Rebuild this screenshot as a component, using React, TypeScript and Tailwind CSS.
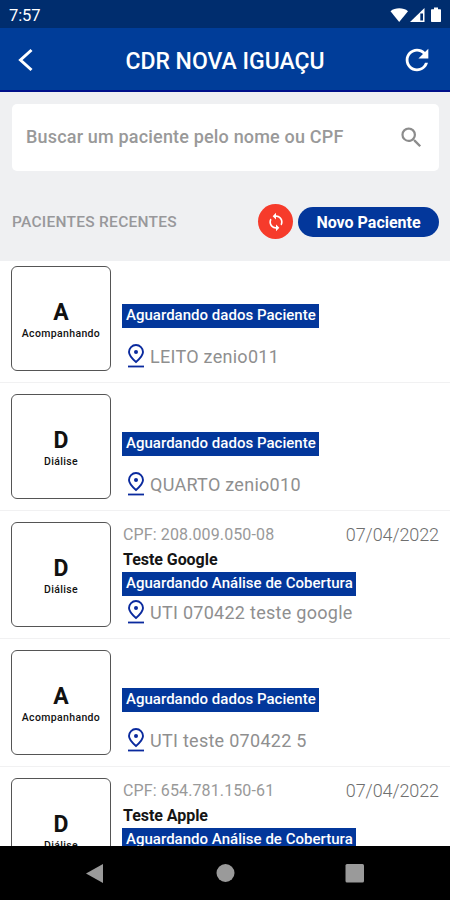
import React from 'react';
import { MdRefresh, MdSearch, MdSync } from 'react-icons/md';

type Patient = {
  letter: string;
  kind: string;
  status: string;
  place: string;
  cpf?: string;
  name?: string;
  date?: string;
};

const patients: Patient[] = [
  { letter: 'A', kind: 'Acompanhando', status: 'Aguardando dados Paciente', place: 'LEITO zenio011' },
  { letter: 'D', kind: 'Diálise', status: 'Aguardando dados Paciente', place: 'QUARTO zenio010' },
  {
    letter: 'D',
    kind: 'Diálise',
    status: 'Aguardando Análise de Cobertura',
    place: 'UTI 070422 teste google',
    cpf: 'CPF: 208.009.050-08',
    name: 'Teste Google',
    date: '07/04/2022',
  },
  { letter: 'A', kind: 'Acompanhando', status: 'Aguardando dados Paciente', place: 'UTI teste 070422 5' },
  {
    letter: 'D',
    kind: 'Diálise',
    status: 'Aguardando Análise de Cobertura',
    place: '',
    cpf: 'CPF: 654.781.150-61',
    name: 'Teste Apple',
    date: '07/04/2022',
  },
];

function StatusBar() {
  return (
    <div className="flex h-7 shrink-0 items-center bg-[#002d6e] pl-[9px] pr-[7px] pt-[3px] text-white">
      <span className="flex-1 pt-px text-[16.5px] leading-none tracking-[-0.1px]">7:57</span>
      <svg width="53" height="18" viewBox="0 0 53 18" fill="#fff">
        <path d="M0.500 4.200C5 .4 13.500 .4 18 4.200L9.200 15z" />
        <path d="M34.500 1V15H20z" />
        <path d="M30.300 6.500V13.500H33V6.500z" fill="#002d6e" />
        <path d="M44 .5h4v1.700h2.300q.7 0 .7.700v11.400q0 .7-.7.700h-8.600q-.7 0-.7-.7V2.900q0-.7.7-.7h2.300z" />
      </svg>
    </div>
  );
}

function PinIcon() {
  return (
    <svg width="18" height="24" viewBox="0 0 18 24" fill="none" className="shrink-0">
      <path d="M9 18C5 14.500 2 11.600 2 8a7 7 0 0 1 14 0c0 3.600-3 6.500-7 10z" stroke="#0a2a9e" strokeWidth="1.900" />
      <circle cx="9" cy="8" r="2" fill="#0a2a9e" />
      <path d="M1 22.500h16" stroke="#0a2a9e" strokeWidth="1.800" />
    </svg>
  );
}

function PatientRow({ p, first }: { p: Patient; first: boolean }) {
  return (
    <div
      className={`flex w-full shrink-0 border-b border-[#f1f1f2] px-[11px] ${first ? 'h-[122px] pt-[5px]' : 'h-32 pt-[11px]'}`}
    >
      <div className="flex h-[105px] w-[100px] shrink-0 flex-col items-center rounded-[6px] border border-[#555] pt-[32px] text-[#111]">
        <span className="text-[23px] font-bold leading-[28px]">{p.letter}</span>
        <span className="text-[10.5px] font-medium leading-[14px] tracking-[0.35px]">{p.kind}</span>
      </div>
      <div className="ml-[11px] flex h-[105px] flex-1 flex-col items-start">
        {p.cpf ? (
          <>
            <div className="flex h-[26px] w-full items-center justify-between whitespace-nowrap pl-px text-[#999]">
              <span className="text-[16px] tracking-[0.12px]">{p.cpf}</span>
              <span className="text-[18px] font-light leading-6 tracking-[-0.1px] text-[#6f6f6f]">{p.date}</span>
            </div>
            <div className="flex h-6 items-center pl-px text-[16px] font-bold tracking-[-0.05px] text-[#151515]">{p.name}</div>
          </>
        ) : (
          <div className="h-[38px]" />
        )}
        <div className="flex h-6 items-center whitespace-nowrap bg-[#03379b] pb-px pl-1 pr-[3px] text-[15px] font-medium tracking-[0.02px] text-white">
          {p.status}
        </div>
        {p.place && (
          <div className={`flex items-center pl-[5px] ${p.cpf ? 'pt-[3px]' : 'pt-[15px]'}`}>
            <PinIcon />
            <span className="ml-[5px] mt-0.5 whitespace-nowrap text-[18px] leading-6 tracking-[0.28px] text-[#8f8f8f]">{p.place}</span>
          </div>
        )}
      </div>
    </div>
  );
}

export default function App() {
  return (
    <div className="flex h-[900px] w-[450px] flex-col overflow-hidden bg-white font-['Roboto',sans-serif]">
      <StatusBar />
      <header className="flex h-16 shrink-0 items-center border-b-2 border-[#00108a] bg-[#003d99] pl-[17px] pr-4 pt-0.5 text-white">
        <svg width="18" height="24" viewBox="0 0 18 24" fill="none" stroke="#fff" strokeWidth="3">
          <path d="M14.500 2L3.500 12l11 10" />
        </svg>
        <h1 className="flex-1 pl-[15px] pt-0.5 text-center text-[23px] font-medium leading-none">CDR NOVA IGUAÇU</h1>
        <MdRefresh size={34} />
      </header>
      <section className="flex h-[169px] shrink-0 flex-col bg-[#eff0f2] pl-[12px] pr-[11px] pt-[12px]">
        <div className="flex h-[67px] shrink-0 items-center rounded-[5px] bg-white pl-[14px] pr-[14px]">
          <span className="flex-1 whitespace-nowrap pb-0.5 text-[18px] font-medium tracking-[0.18px] text-[#999]">
            Buscar um paciente pelo nome ou CPF
          </span>
          <MdSearch size={27} color="#8c8c8c" />
        </div>
        <div className="mt-[33px] flex h-[35px] items-center">
          <span className="flex-1 whitespace-nowrap pt-0.5 text-[15.5px] font-medium tracking-[0.27px] text-[#98989b]">
            PACIENTES RECENTES
          </span>
          <div className="flex size-[35px] items-center justify-center rounded-full bg-[#f63b2b]">
            <MdSync size={20} color="#fff" />
          </div>
          <button className="ml-[5px] h-[30px] w-[141px] whitespace-nowrap rounded-full bg-[#03379b] pt-0.5 text-[16px] font-bold text-white">
            Novo Paciente
          </button>
        </div>
      </section>
      <main className="flex min-h-0 flex-1 flex-col overflow-hidden">
        {patients.map((p, i) => (
          <PatientRow key={i} p={p} first={i === 0} />
        ))}
      </main>
      <nav className="flex h-[54px] shrink-0 items-center bg-black">
        <svg width="450" height="54" viewBox="0 0 450 54" fill="#9a9a9a">
          <path d="M86 27.500L103 18v19z" />
          <circle cx="225.500" cy="27" r="9" />
          <rect x="345.500" y="18" width="18.500" height="18.500" rx="1.500" />
        </svg>
      </nav>
    </div>
  );
}
